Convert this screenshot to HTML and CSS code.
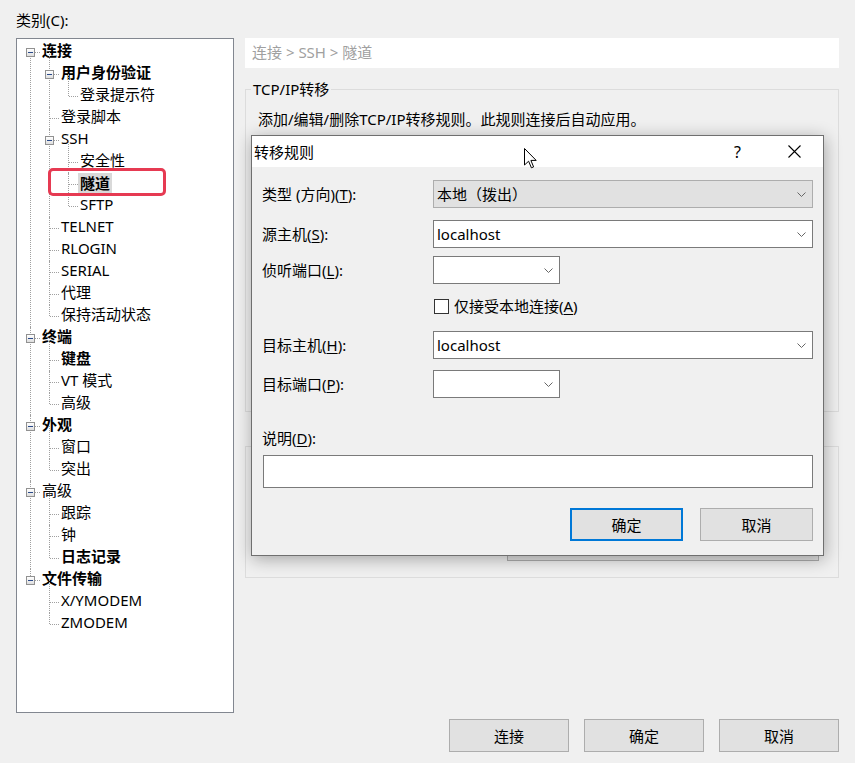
FILE: index.html
```html
<!DOCTYPE html>
<html lang="zh-CN">
<head>
<meta charset="utf-8">
<title>会话选项</title>
<link rel="stylesheet" href="styles.css">
</head>
<body>
<div class="app">
  <div class="cat-label">类别(C):</div>
  <div class="main">
    <div class="tree-box">
      <ul class="tree">
        <li><div class="row"><span class="exp"></span><span class="lbl b">连接</span></div>
          <ul>
            <li><div class="row"><span class="exp"></span><span class="lbl b">用户身份验证</span></div>
              <ul>
                <li><div class="row"><span class="lbl">登录提示符</span></div></li>
              </ul>
            </li>
            <li><div class="row"><span class="lbl">登录脚本</span></div></li>
            <li><div class="row"><span class="exp"></span><span class="lbl">SSH</span></div>
              <ul>
                <li><div class="row"><span class="lbl">安全性</span></div></li>
                <li><div class="row"><span class="lbl b sel">隧道</span></div></li>
                <li><div class="row"><span class="lbl">SFTP</span></div></li>
              </ul>
            </li>
            <li><div class="row"><span class="lbl">TELNET</span></div></li>
            <li><div class="row"><span class="lbl">RLOGIN</span></div></li>
            <li><div class="row"><span class="lbl">SERIAL</span></div></li>
            <li><div class="row"><span class="lbl">代理</span></div></li>
            <li><div class="row"><span class="lbl">保持活动状态</span></div></li>
          </ul>
        </li>
        <li><div class="row"><span class="exp"></span><span class="lbl b">终端</span></div>
          <ul>
            <li><div class="row"><span class="lbl b">键盘</span></div></li>
            <li><div class="row"><span class="lbl">VT 模式</span></div></li>
            <li><div class="row"><span class="lbl">高级</span></div></li>
          </ul>
        </li>
        <li><div class="row"><span class="exp"></span><span class="lbl b">外观</span></div>
          <ul>
            <li><div class="row"><span class="lbl">窗口</span></div></li>
            <li><div class="row"><span class="lbl">突出</span></div></li>
          </ul>
        </li>
        <li><div class="row"><span class="exp"></span><span class="lbl">高级</span></div>
          <ul>
            <li><div class="row"><span class="lbl">跟踪</span></div></li>
            <li><div class="row"><span class="lbl">钟</span></div></li>
            <li><div class="row"><span class="lbl b">日志记录</span></div></li>
          </ul>
        </li>
        <li><div class="row"><span class="exp"></span><span class="lbl b">文件传输</span></div>
          <ul>
            <li><div class="row"><span class="lbl">X/YMODEM</span></div></li>
            <li><div class="row"><span class="lbl">ZMODEM</span></div></li>
          </ul>
        </li>
      </ul>
      <div class="mark"></div>
    </div>
    <div class="panel">
      <div class="crumb">连接 &gt; SSH &gt; 隧道</div>
      <fieldset class="group g1">
        <legend>TCP/IP转移</legend>
        <p class="hint">添加/编辑/删除TCP/IP转移规则。此规则连接后自动应用。</p>
        <div class="g1-space"></div>
      </fieldset>
      <div class="group g2"><div class="g2-btn"></div></div>
    </div>
  </div>
  <div class="footer">
    <button class="btn">连接</button>
    <button class="btn">确定</button>
    <button class="btn">取消</button>
  </div>

  <div class="dialog">
    <div class="titlebar">
      <span class="title">转移规则</span>
      <span class="cap">?</span>
      <span class="cap"><svg width="13" height="13" viewBox="0 0 13 13"><path d="M0.5 0.5 L12.5 12.5 M12.5 0.5 L0.5 12.5" stroke="#000" stroke-width="1.1" fill="none"/></svg></span>
    </div>
    <div class="dbody">
      <div class="frow">
        <span class="flabel">类型 (方向)(<u>T</u>):</span>
        <div class="combo ro"><span class="cval">本地（拨出）</span><svg class="chev" width="9" height="5" viewBox="0 0 9 5"><polyline points="0.5,0.5 4.5,4.5 8.5,0.5" fill="none" stroke="#666" stroke-width="1"/></svg></div>
      </div>
      <div class="frow r2">
        <span class="flabel">源主机(<u>S</u>):</span>
        <div class="combo"><span class="cval">localhost</span><svg class="chev" width="9" height="5" viewBox="0 0 9 5"><polyline points="0.5,0.5 4.5,4.5 8.5,0.5" fill="none" stroke="#666" stroke-width="1"/></svg></div>
      </div>
      <div class="frow r3">
        <span class="flabel">侦听端口(<u>L</u>):</span>
        <div class="combo small"><span class="cval"></span><svg class="chev" width="9" height="5" viewBox="0 0 9 5"><polyline points="0.5,0.5 4.5,4.5 8.5,0.5" fill="none" stroke="#666" stroke-width="1"/></svg></div>
      </div>
      <div class="frow r4">
        <span class="flabel"></span>
        <label class="check"><span class="cbox"></span><span>仅接受本地连接(<u>A</u>)</span></label>
      </div>
      <div class="frow r5">
        <span class="flabel">目标主机(<u>H</u>):</span>
        <div class="combo"><span class="cval">localhost</span><svg class="chev" width="9" height="5" viewBox="0 0 9 5"><polyline points="0.5,0.5 4.5,4.5 8.5,0.5" fill="none" stroke="#666" stroke-width="1"/></svg></div>
      </div>
      <div class="frow r6">
        <span class="flabel">目标端口(<u>P</u>):</span>
        <div class="combo small"><span class="cval"></span><svg class="chev" width="9" height="5" viewBox="0 0 9 5"><polyline points="0.5,0.5 4.5,4.5 8.5,0.5" fill="none" stroke="#666" stroke-width="1"/></svg></div>
      </div>
      <div class="desc-label">说明(<u>D</u>):</div>
      <div class="desc-input"></div>
      <div class="dbtns">
        <button class="btn dbtn default">确定</button>
        <button class="btn dbtn">取消</button>
      </div>
    </div>
  </div>

  <svg class="cursor" width="14" height="22" viewBox="0 0 14 22"><path d="M0.5 0.5 L0.5 17 L4.6 13.2 L7.4 19.8 L9.6 18.9 L6.9 12.4 L12.2 12.4 Z" fill="#fff" stroke="#000" stroke-width="1" stroke-linejoin="miter"/></svg>
</div>
</body>
</html>
```

FILE: styles.css
```css
* { box-sizing: border-box; }
html, body { margin: 0; padding: 0; background: #f0f0f0; }
body {
  font-family: "Noto Sans", "Noto Sans CJK SC", sans-serif;
  font-size: 15px;
  color: #000;
}
u { text-decoration: underline; text-underline-offset: 2px; }

.app {
  position: relative;
  width: 855px;
  height: 763px;
  padding: 0 16px;
  overflow: hidden;
}

.cat-label {
  height: 38px;
  padding-top: 10px;
  line-height: 20px;
}

.main {
  display: flex;
  align-items: flex-start;
  gap: 11px;
}

/* ---------- tree ---------- */
.tree-box {
  position: relative;
  width: 218px;
  height: 675px;
  flex: none;
  background: #fff;
  border: 1px solid #828790;
  padding-top: 2px;
}
.tree, .tree ul { list-style: none; margin: 0; padding: 0; }
.tree ul { padding-left: 19px; }
.tree li { position: relative; }
.tree li::before {
  content: "";
  position: absolute;
  left: 13px;
  top: 0;
  bottom: 0;
  border-left: 1px dotted #a0a0a0;
}
.tree li:last-child::before { bottom: auto; height: 11px; }
.tree > li:first-child::before { top: 11px; }
.tree ul > li:first-child::before { top: -11px; }
.tree ul > li:first-child:last-child::before { height: 22px; }

.row {
  position: relative;
  height: 22px;
  display: flex;
  align-items: center;
  padding-left: 25px;
}
.row::before {
  content: "";
  position: absolute;
  left: 14px;
  top: 11px;
  width: 9px;
  border-top: 1px dotted #a0a0a0;
}
.exp {
  position: absolute;
  left: 9px;
  top: 7px;
  width: 9px;
  height: 9px;
  border: 1px solid #919191;
  background: linear-gradient(#ffffff, #dedede);
  z-index: 1;
}
.exp::after {
  content: "";
  position: absolute;
  left: 1px;
  top: 3px;
  width: 5px;
  height: 1px;
  background: #2a4a8a;
}
.lbl {
  line-height: 19px;
  padding-bottom: 3px;
  white-space: nowrap;
}
.lbl.b { font-weight: 700; }
.lbl.sel {
  background: #d9d9d9;
  padding: 1px 2px 2px;
  margin-left: -2px;
}
.mark {
  position: absolute;
  left: 31px;
  top: 129px;
  width: 118px;
  height: 28px;
  border: 3px solid #e63a52;
  border-radius: 5px;
}

/* ---------- right panel ---------- */
.panel { flex: 1; }
.crumb {
  height: 30px;
  line-height: 28px;
  padding-bottom: 2px;
  background: #fff;
  padding-left: 7px;
  color: #a0a0a0;
}
.group {
  border: 1px solid #dcdcdc;
}
fieldset.group {
  margin: 11px 0 0;
  padding: 10px 12px 15px;
  min-inline-size: 0;
}
fieldset.group legend {
  padding: 0 2px;
  margin-left: -7px;
  line-height: 20px;
}
.hint { margin: 0; line-height: 20px; }
.g1-space { height: 267px; }
.g2 {
  margin-top: 34px;
  height: 132px;
  display: flex;
  flex-direction: column;
  justify-content: flex-end;
  align-items: flex-end;
  padding: 0 19px 16px 0;
}
.g2-btn {
  width: 312px;
  height: 33px;
  background: #e1e1e1;
  border: 1px solid #adadad;
}

/* ---------- buttons ---------- */
.btn {
  font: inherit;
  color: #000;
  background: #e1e1e1;
  border: 1px solid #adadad;
  margin: 0;
  padding: 0;
  height: 33px;
  line-height: 20px;
}
.footer {
  margin-top: 6px;
  display: flex;
  justify-content: flex-end;
  gap: 15px;
}
.footer .btn { width: 120px; }

/* ---------- dialog ---------- */
.dialog {
  position: absolute;
  left: 251px;
  top: 135px;
  width: 573px;
  height: 421px;
  background: #f0f0f0;
  border: 1px solid #6f6f6f;
  box-shadow: 1px 3px 16px rgba(0, 0, 0, 0.32);
}
.titlebar {
  height: 31px;
  background: #fff;
  display: flex;
  align-items: center;
}
.title {
  flex: 1;
  padding-left: 2px;
  line-height: 20px;
}
.cap {
  width: 57px;
  height: 31px;
  display: flex;
  align-items: center;
  justify-content: center;
  font-size: 16px;
}
.dbody {
  padding: 13px 10px 14px;
}
.frow {
  display: grid;
  grid-template-columns: 171px 380px;
  align-items: center;
  height: 28px;
}
.r2 { margin-top: 12px; }
.r3 { margin-top: 8px; }
.r4 { margin-top: 8px; }
.r5 { margin-top: 11px; }
.r6 { margin-top: 11px; }
.flabel { line-height: 20px; white-space: nowrap; }
.combo {
  height: 28px;
  display: flex;
  align-items: center;
  background: #fff;
  border: 1px solid #7a7a7a;
}
.combo.ro {
  background: #e1e1e1;
  border-color: #adadad;
}
.combo.small { width: 127px; }
.cval {
  flex: 1;
  padding-left: 3px;
  line-height: 20px;
}
.chev { margin-right: 6px; flex: none; }
.check {
  display: flex;
  align-items: center;
  gap: 5px;
  margin-left: 1px;
  line-height: 20px;
}
.cbox {
  width: 15px;
  height: 15px;
  background: #fff;
  border: 1px solid #333;
}
.desc-label {
  margin-top: 30px;
  line-height: 20px;
}
.desc-input {
  margin-top: 7px;
  width: 550px;
  height: 33px;
  background: #fff;
  border: 1px solid #7a7a7a;
  margin-left: 1px;
}
.dbtns {
  margin-top: 20px;
  display: flex;
  justify-content: flex-end;
  gap: 17px;
  width: 551px;
}
.dbtn { width: 113px; }
.dbtn.default { border: 2px solid #0078d7; }

.cursor {
  position: absolute;
  left: 524px;
  top: 148px;
}
```
